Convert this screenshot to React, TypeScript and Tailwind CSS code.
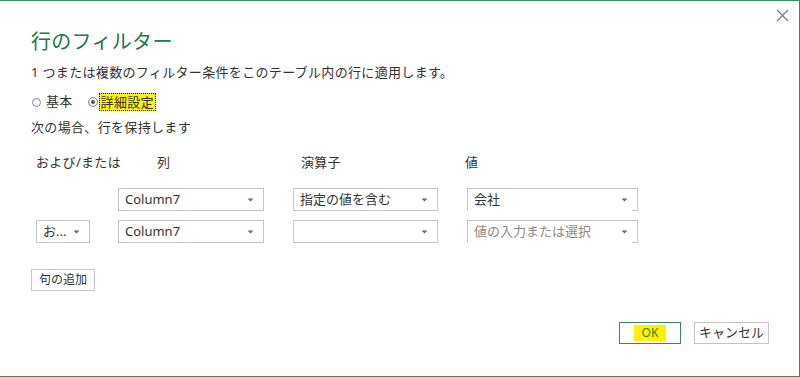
import React from "react";

const Arrow = () => (
  <svg width="7" height="4" viewBox="0 0 7 4" className="shrink-0">
    <path d="M0.5 0.5 L6.5 0.5 L3.5 3.5 Z" fill="#6b6b6b" />
  </svg>
);

function Select({ text, placeholder, combo }: { text?: string; placeholder?: string; combo?: boolean }) {
  if (combo) {
    return (
      <div className="relative h-[23px] w-full border-t border-l border-r border-[#c4c4c4] flex items-center justify-between pl-[6px] pr-[9px]">
        <span className={placeholder ? "text-[#8a8a8a]" : "text-[#333]"}>{text ?? placeholder}</span>
        <Arrow />
        <div className="absolute right-[-1px] bottom-0 w-[6px] h-px bg-[#c4c4c4]" />
      </div>
    );
  }
  return (
    <div className="h-[23px] w-full border border-[#c4c4c4] flex items-center justify-between pl-[6px] pr-[9px]">
      <span className="text-[#333] whitespace-nowrap">{text ?? ""}</span>
      <Arrow />
    </div>
  );
}

export default function App() {
  return (
    <div
      className="relative w-[800px] h-[377px] bg-white border-t border-r border-b border-[#3b8a5c] overflow-hidden text-[13px] text-[#333]"
      style={{ fontFamily: '"Noto Sans", "Noto Sans CJK JP", sans-serif' }}
    >
      <button className="absolute right-[10px] top-[8px] w-[13px] h-[13px]">
        <svg width="13" height="13" viewBox="0 0 13 13">
          <path d="M1 1 L12 12 M12 1 L1 12" stroke="#7a7a7a" strokeWidth="1.2" />
        </svg>
      </button>

      <div className="flex flex-col pl-[31px] pr-[30px] pt-[27px]">
        <h1 className="text-[20px] leading-[28px] text-[#23754a] font-normal tracking-[0.3px]">行のフィルター</h1>
        <p className="mt-[6px] leading-[20px] tracking-[0.33px]">1 つまたは複数のフィルター条件をこのテーブル内の行に適用します。</p>

        <div className="mt-[10px] flex items-center h-[20px]">
          <span className="ml-[1px] w-[9px] h-[9px] rounded-full border border-[#8a8a8a] bg-white" />
          <span className="ml-[5px] tracking-[0.3px]">基本</span>
          <span className="ml-[15px] w-[10px] h-[10px] rounded-full border border-[#8a8a8a] bg-[#f4f4f4] flex items-center justify-center">
            <span className="w-[4px] h-[4px] rounded-full bg-[#555]" />
          </span>
          <span className="ml-[1px] px-[2px] h-[18px] leading-[18px] bg-[#fff200] outline outline-1 outline-dotted outline-[#222] -outline-offset-1 tracking-[0.3px]">
            詳細設定
          </span>
        </div>

        <p className="mt-[5px] leading-[20px] tracking-[0.33px]">次の場合、行を保持します</p>

        <div className="mt-[15px] ml-[5px] grid grid-cols-[53px_146px_145px_171px] gap-x-[29px] items-center">
          <div className="h-[20px] leading-[20px] whitespace-nowrap tracking-[0.3px]">および/または</div>
          <div className="h-[20px] leading-[20px] pl-[39px]">列</div>
          <div className="h-[20px] leading-[20px] pl-[8px] tracking-[0.3px]">演算子</div>
          <div className="h-[20px] leading-[20px] -ml-[2px]">値</div>

          <div className="mt-[16px]" />
          <div className="mt-[16px]"><Select text="Column7" /></div>
          <div className="mt-[16px]"><Select text="指定の値を含む" /></div>
          <div className="mt-[16px]"><Select combo text="会社" /></div>

          <div className="mt-[9px]">
            <div className="h-[23px] w-[54px] border border-[#c4c4c4] flex items-center justify-between pl-[6px] pr-[9px]">
              <span>お...</span>
              <Arrow />
            </div>
          </div>
          <div className="mt-[9px]"><Select text="Column7" /></div>
          <div className="mt-[9px]"><Select /></div>
          <div className="mt-[9px]"><Select combo placeholder="値の入力または選択" /></div>
        </div>

        <div className="mt-[26px]">
          <button className="h-[22px] w-[64px] border border-[#c4c4c4] bg-white text-[12px] text-[#333] flex items-center justify-center">
            句の追加
          </button>
        </div>

        <div className="mt-[31px] flex justify-end gap-[13px]">
          <button className="h-[22px] w-[62px] border border-[#3b8a5c] bg-white flex items-center justify-center">
            <span className="w-[32px] h-[16px] leading-[16px] bg-[#fff200] text-[#3a7d2c] text-[12px]">OK</span>
          </button>
          <button className="h-[22px] w-[75px] border border-[#c4c4c4] bg-white text-[13px] text-[#333] flex items-center justify-center">
            キャンセル
          </button>
        </div>
      </div>
    </div>
  );
}
